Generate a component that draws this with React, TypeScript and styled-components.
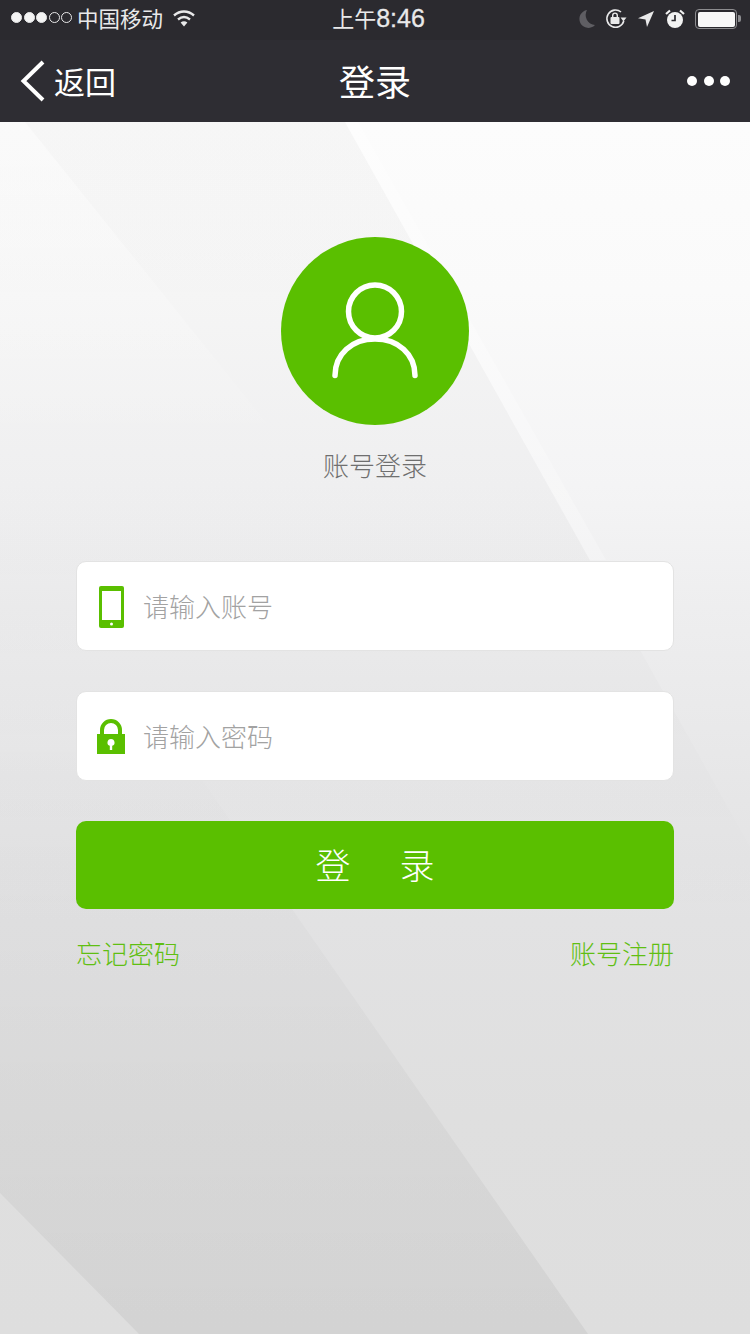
import styled, { createGlobalStyle } from 'styled-components';

const GREEN = '#5abf00';
const CJK = '"Noto Sans CJK SC", "Liberation Sans", sans-serif';

const GlobalStyle = createGlobalStyle`
  html, body {
    margin: 0;
    padding: 0;
    background: #dedede;
  }
  * {
    box-sizing: border-box;
  }
`;

const Page = styled.div`
  width: 750px;
  height: 1334px;
  overflow: hidden;
  display: flex;
  flex-direction: column;
  font-family: ${CJK};
`;

const Header = styled.header`
  height: 122px;
  flex-shrink: 0;
  background: #2e2d33;
  color: #fff;
`;

const StatusBar = styled.div`
  height: 40px;
  padding: 0 11px 6px;
  display: grid;
  grid-template-columns: 1fr auto 1fr;
  align-items: center;
  background: #2b2a2f;
`;

const StatusLeft = styled.div`
  display: flex;
  align-items: center;
  font-size: 21.5px;
  color: #e9e9ea;
`;

const SignalDots = styled.div`
  display: flex;
  gap: 1.5px;
  margin-right: 5px;
`;

const SignalDot = styled.span<{ $on: boolean }>`
  width: 11px;
  height: 11px;
  border-radius: 50%;
  border: 1px solid #e9e9ea;
  background: ${({ $on }) => ($on ? '#f4f4f4' : 'transparent')};
`;

const Carrier = styled.span`
  line-height: 34px;
  margin-right: 9px;
`;

const Clock = styled.div`
  margin-left: 7px;
  font-size: 22px;
  line-height: 34px;
  color: #e9e9ea;
  white-space: nowrap;
`;

const ClockDigits = styled.span`
  font-family: "Liberation Sans", sans-serif;
  font-size: 25px;
  -webkit-text-stroke: 0.3px #e9e9ea;
`;

const StatusRight = styled.div`
  display: flex;
  align-items: center;
  justify-content: flex-end;
  gap: 10px;
  padding-top: 3px;
`;

const Battery = styled.div`
  position: relative;
  width: 42px;
  height: 20px;
  margin-right: 2px;
  padding: 1.5px;
  border: 1.5px solid #8c8c8f;
  border-radius: 4px;

  &::before {
    content: '';
    display: block;
    height: 100%;
    background: #f8f8f8;
    border-radius: 2px;
  }

  &::after {
    content: '';
    position: absolute;
    right: -5px;
    top: 5px;
    width: 3px;
    height: 7px;
    background: #8c8c8f;
    border-radius: 0 2px 2px 0;
  }
`;

const NavBar = styled.nav`
  height: 82px;
  padding: 0 20px;
  display: grid;
  grid-template-columns: 1fr auto 1fr;
  align-items: center;
`;

const BackLink = styled.div`
  display: flex;
  align-items: center;
  gap: 9px;
  font-size: 31px;
  line-height: 38px;
`;

const NavTitle = styled.h1`
  margin: 0 0 2px;
  font-size: 36px;
  font-weight: 400;
  line-height: 40px;
`;

const MoreDots = styled.div`
  display: flex;
  justify-content: flex-end;
  gap: 6.5px;
`;

const MoreDot = styled.span`
  width: 10px;
  height: 10px;
  border-radius: 50%;
  background: #fff;
`;

const Main = styled.main`
  position: relative;
  isolation: isolate;
  flex: 1;
  padding: 115px 76px 0;
  display: flex;
  flex-direction: column;
  align-items: center;
  background: linear-gradient(
    180deg,
    #fcfcfc 0%,
    #fafafa 14%,
    #f4f4f5 30%,
    #eeeeef 40%,
    #e6e6e7 56%,
    #e2e2e3 66%,
    #dfdfdf 82%,
    #dedede 100%
  );
`;

// the faint folded shapes of the wallpaper, painted under the form
const Facet = styled.div<{ $shape: string; $shade: string }>`
  position: absolute;
  inset: 0;
  z-index: -1;
  clip-path: polygon(${({ $shape }) => $shape});
  background: ${({ $shade }) => $shade};
`;

const Avatar = styled.div`
  width: 188px;
  height: 188px;
  border-radius: 50%;
  background: ${GREEN};
  display: flex;
  align-items: center;
  justify-content: center;
`;

const AccountLabel = styled.p`
  margin: 22px 0 0;
  font-size: 26px;
  font-weight: 300;
  line-height: 36px;
  color: #6f6f6f;
`;

const Field = styled.label<{ $top: number }>`
  width: 598px;
  height: 90px;
  margin-top: ${({ $top }) => $top}px;
  padding-left: 19px;
  display: flex;
  align-items: center;
  flex-shrink: 0;
  background: #fff;
  border: 1px solid #e3e3e3;
  border-radius: 10px;
`;

const FieldIcon = styled.span`
  width: 30px;
  margin-right: 17px;
  display: flex;
  align-items: center;
  justify-content: center;
`;

const FieldInput = styled.input`
  flex: 1;
  min-width: 0;
  height: 40px;
  padding: 0 0 2px;
  border: 0;
  outline: none;
  background: transparent;
  font-family: ${CJK};
  font-size: 26px;
  font-weight: 300;
  color: #333;

  &::placeholder {
    color: #a2a2a2;
    opacity: 1;
  }
`;

const SubmitButton = styled.button`
  width: 598px;
  height: 88px;
  margin-top: 40px;
  padding: 0 0 4px 7px;
  flex-shrink: 0;
  border: 0;
  border-radius: 10px;
  background: ${GREEN};
  color: #fff;
  font-family: ${CJK};
  font-size: 35px;
  font-weight: 300;
  letter-spacing: 7px;
`;

const LinkRow = styled.div`
  width: 598px;
  margin-top: 26px;
  display: flex;
  justify-content: space-between;
`;

const TextLink = styled.a`
  font-size: 26px;
  font-weight: 300;
  line-height: 36px;
  color: #5fbf12;
`;

const App = () => {
  return (
    <Page>
      <GlobalStyle />
      <Header>
        <StatusBar>
          <StatusLeft>
            <SignalDots>
              {[true, true, true, false, false].map((on, i) => (
                <SignalDot key={i} $on={on} />
              ))}
            </SignalDots>
            <Carrier>中国移动</Carrier>
            <svg width="24" height="18" viewBox="0 0 24 18" fill="none" stroke="#e9e9ea" strokeWidth="2.4">
              <path d="M2 6.5C8 1.2 16 1.2 22 6.5" />
              <path d="M6 10.5C9.7 7.5 14.3 7.5 18 10.5" />
              <path d="M12 17.5 8.6 13.4C10.6 11.9 13.4 11.9 15.4 13.4Z" fill="#e9e9ea" stroke="none" />
            </svg>
          </StatusLeft>
          <Clock>
            上午<ClockDigits>8:46</ClockDigits>
          </Clock>
          <StatusRight>
            <svg width="18" height="20" viewBox="0 0 18 20">
              <path d="M10 1A9 9 0 1 0 18 16 10 10 0 0 1 10 1Z" fill="#5f5e63" />
            </svg>
            <svg width="22" height="22" viewBox="0 0 22 22" fill="none" stroke="#e9e9ea" strokeWidth="1.6">
              <path d="M18.8 13A8.6 8.6 0 1 1 16 4" />
              <path d="M21.5 9.5 18.4 13.5 15.6 9.5Z" fill="#e9e9ea" stroke="none" />
              <rect x="5.5" y="9" width="9" height="7" rx="1" fill="#e9e9ea" stroke="none" />
              <path d="M7.7 9V7.4a2.3 2.3 0 0 1 4.6 0V9" strokeWidth="1.4" />
            </svg>
            <svg width="18" height="18" viewBox="0 0 18 18">
              <path d="M17 1 10 17 8.5 9.5 1 8.2Z" fill="#e9e9ea" />
            </svg>
            <svg width="20" height="20" viewBox="0 0 20 20">
              <circle cx="10" cy="11" r="8" fill="#f2f2f2" />
              <path d="M10 6v5.5H6.5" fill="none" stroke="#2b2a2f" strokeWidth="1.7" />
              <path d="M1 5 5 1.5M19 5 15 1.5" stroke="#f2f2f2" strokeWidth="2.2" />
            </svg>
            <Battery />
          </StatusRight>
        </StatusBar>
        <NavBar>
          <BackLink>
            <svg width="25" height="42" viewBox="0 0 25 42" fill="none" stroke="#fff" strokeWidth="4">
              <path d="M23 2 3.5 21 23 40" />
            </svg>
            返回
          </BackLink>
          <NavTitle>登录</NavTitle>
          <MoreDots>
            <MoreDot />
            <MoreDot />
            <MoreDot />
          </MoreDots>
        </NavBar>
      </Header>
      <Main>
        <Facet
          $shape="0 0, 345px 0, 750px 725px, 750px 860px, 0 860px"
          $shade="linear-gradient(180deg, rgba(0,0,0,0.024) 0%, rgba(0,0,0,0.02) 36%, rgba(0,0,0,0) 68%)"
        />
        <Facet
          $shape="0 0, 25px 0, 290px 330px, 0 330px"
          $shade="linear-gradient(180deg, rgba(255,255,255,0.45) 0%, rgba(255,255,255,0) 27%)"
        />
        <Facet
          $shape="345px 0, 358px 0, 606px 438px, 590px 438px"
          $shade="linear-gradient(180deg, rgba(255,255,255,0.35) 0%, rgba(255,255,255,0.22) 36%)"
        />
        <Facet
          $shape="120px 540px, 588px 1212px, 139px 1212px, 0 1071px, 0 540px"
          $shade="linear-gradient(180deg, rgba(0,0,0,0) 50%, rgba(0,0,0,0.014) 64%, rgba(0,0,0,0.05) 100%)"
        />
        <Avatar>
          <svg width="88" height="98" viewBox="0 0 88 98" fill="none" stroke="#fff" strokeWidth="5.5" strokeLinecap="round">
            <circle cx="44" cy="29.5" r="26.5" />
            <path d="M4 93.5C4 72 21 57 44 57S84 72 84 93.5" />
          </svg>
        </Avatar>
        <AccountLabel>账号登录</AccountLabel>
        <Field $top={78}>
          <FieldIcon>
            <svg width="25" height="44" viewBox="0 0 25 44">
              <rect y="2" width="25" height="42" rx="2" fill={GREEN} />
              <rect x="3" y="7" width="19" height="29" fill="#fff" />
              <circle cx="12.5" cy="40" r="1.5" fill="#fff" />
            </svg>
          </FieldIcon>
          <FieldInput placeholder="请输入账号" />
        </Field>
        <Field $top={40}>
          <FieldIcon>
            <svg width="28" height="36" viewBox="0 0 28 36">
              <path d="M5 18V12a9 9 0 0 1 18 0v6" fill="none" stroke={GREEN} strokeWidth="4" />
              <path fillRule="evenodd" fill={GREEN} d="M0 16h28v20H0ZM14 21a3.5 3.5 0 0 0-1.2 6.8V32h2.4v-4.2A3.5 3.5 0 0 0 14 21Z" />
            </svg>
          </FieldIcon>
          <FieldInput placeholder="请输入密码" />
        </Field>
        <SubmitButton>登　录</SubmitButton>
        <LinkRow>
          <TextLink>忘记密码</TextLink>
          <TextLink>账号注册</TextLink>
        </LinkRow>
      </Main>
    </Page>
  );
};

export default App;
